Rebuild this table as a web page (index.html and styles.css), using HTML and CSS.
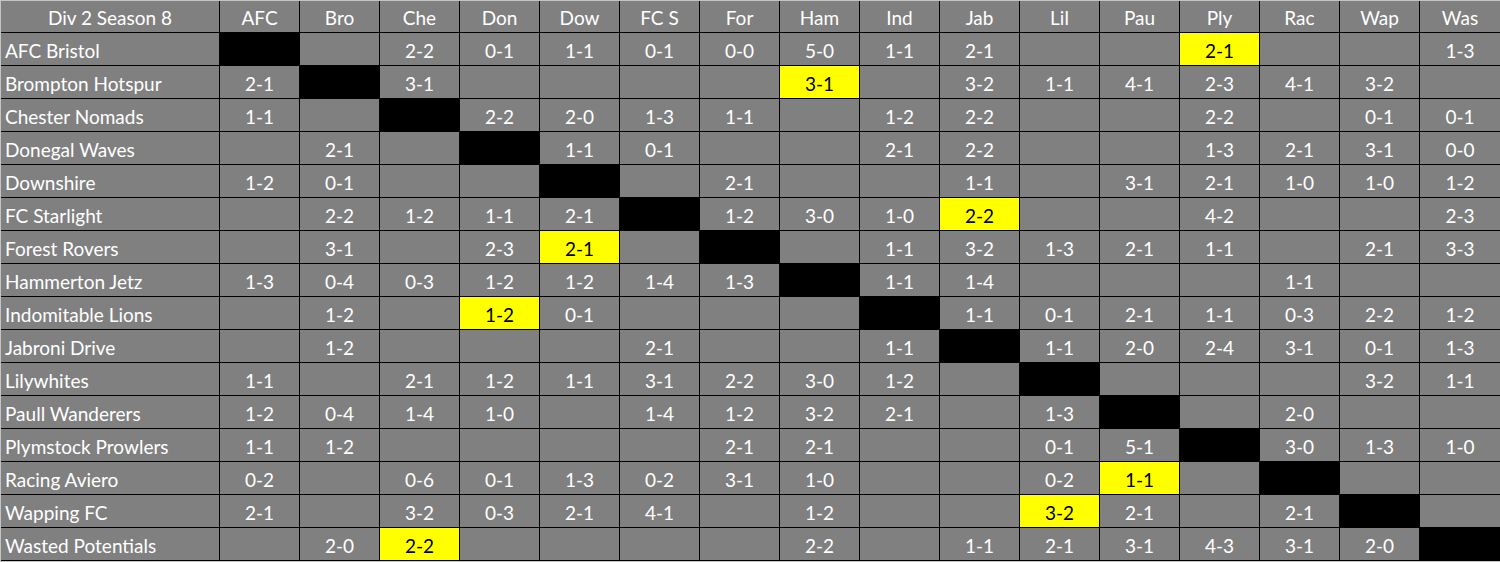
FILE: index.html
```html
<!DOCTYPE html>
<html>
<head>
<meta charset="utf-8">
<link rel="stylesheet" href="styles.css">
</head>
<body>
<div class="sheet">
  <div class="row"><div class="c name head">Div 2 Season 8</div><div class="c">AFC</div><div class="c">Bro</div><div class="c">Che</div><div class="c">Don</div><div class="c">Dow</div><div class="c">FC S</div><div class="c">For</div><div class="c">Ham</div><div class="c">Ind</div><div class="c">Jab</div><div class="c">Lil</div><div class="c">Pau</div><div class="c">Ply</div><div class="c">Rac</div><div class="c">Wap</div><div class="c">Was</div></div>
  <div class="row"><div class="c name">AFC Bristol</div><div class="c x"></div><div class="c"></div><div class="c">2-2</div><div class="c">0-1</div><div class="c">1-1</div><div class="c">0-1</div><div class="c">0-0</div><div class="c">5-0</div><div class="c">1-1</div><div class="c">2-1</div><div class="c"></div><div class="c"></div><div class="c y">2-1</div><div class="c"></div><div class="c"></div><div class="c">1-3</div></div>
  <div class="row"><div class="c name">Brompton Hotspur</div><div class="c">2-1</div><div class="c x"></div><div class="c">3-1</div><div class="c"></div><div class="c"></div><div class="c"></div><div class="c"></div><div class="c y">3-1</div><div class="c"></div><div class="c">3-2</div><div class="c">1-1</div><div class="c">4-1</div><div class="c">2-3</div><div class="c">4-1</div><div class="c">3-2</div><div class="c"></div></div>
  <div class="row"><div class="c name">Chester Nomads</div><div class="c">1-1</div><div class="c"></div><div class="c x"></div><div class="c">2-2</div><div class="c">2-0</div><div class="c">1-3</div><div class="c">1-1</div><div class="c"></div><div class="c">1-2</div><div class="c">2-2</div><div class="c"></div><div class="c"></div><div class="c">2-2</div><div class="c"></div><div class="c">0-1</div><div class="c">0-1</div></div>
  <div class="row"><div class="c name">Donegal Waves</div><div class="c"></div><div class="c">2-1</div><div class="c"></div><div class="c x"></div><div class="c">1-1</div><div class="c">0-1</div><div class="c"></div><div class="c"></div><div class="c">2-1</div><div class="c">2-2</div><div class="c"></div><div class="c"></div><div class="c">1-3</div><div class="c">2-1</div><div class="c">3-1</div><div class="c">0-0</div></div>
  <div class="row"><div class="c name">Downshire</div><div class="c">1-2</div><div class="c">0-1</div><div class="c"></div><div class="c"></div><div class="c x"></div><div class="c"></div><div class="c">2-1</div><div class="c"></div><div class="c"></div><div class="c">1-1</div><div class="c"></div><div class="c">3-1</div><div class="c">2-1</div><div class="c">1-0</div><div class="c">1-0</div><div class="c">1-2</div></div>
  <div class="row"><div class="c name">FC Starlight</div><div class="c"></div><div class="c">2-2</div><div class="c">1-2</div><div class="c">1-1</div><div class="c">2-1</div><div class="c x"></div><div class="c">1-2</div><div class="c">3-0</div><div class="c">1-0</div><div class="c y">2-2</div><div class="c"></div><div class="c"></div><div class="c">4-2</div><div class="c"></div><div class="c"></div><div class="c">2-3</div></div>
  <div class="row"><div class="c name">Forest Rovers</div><div class="c"></div><div class="c">3-1</div><div class="c"></div><div class="c">2-3</div><div class="c y">2-1</div><div class="c"></div><div class="c x"></div><div class="c"></div><div class="c">1-1</div><div class="c">3-2</div><div class="c">1-3</div><div class="c">2-1</div><div class="c">1-1</div><div class="c"></div><div class="c">2-1</div><div class="c">3-3</div></div>
  <div class="row"><div class="c name">Hammerton Jetz</div><div class="c">1-3</div><div class="c">0-4</div><div class="c">0-3</div><div class="c">1-2</div><div class="c">1-2</div><div class="c">1-4</div><div class="c">1-3</div><div class="c x"></div><div class="c">1-1</div><div class="c">1-4</div><div class="c"></div><div class="c"></div><div class="c"></div><div class="c">1-1</div><div class="c"></div><div class="c"></div></div>
  <div class="row"><div class="c name">Indomitable Lions</div><div class="c"></div><div class="c">1-2</div><div class="c"></div><div class="c y">1-2</div><div class="c">0-1</div><div class="c"></div><div class="c"></div><div class="c"></div><div class="c x"></div><div class="c">1-1</div><div class="c">0-1</div><div class="c">2-1</div><div class="c">1-1</div><div class="c">0-3</div><div class="c">2-2</div><div class="c">1-2</div></div>
  <div class="row"><div class="c name">Jabroni Drive</div><div class="c"></div><div class="c">1-2</div><div class="c"></div><div class="c"></div><div class="c"></div><div class="c">2-1</div><div class="c"></div><div class="c"></div><div class="c">1-1</div><div class="c x"></div><div class="c">1-1</div><div class="c">2-0</div><div class="c">2-4</div><div class="c">3-1</div><div class="c">0-1</div><div class="c">1-3</div></div>
  <div class="row"><div class="c name">Lilywhites</div><div class="c">1-1</div><div class="c"></div><div class="c">2-1</div><div class="c">1-2</div><div class="c">1-1</div><div class="c">3-1</div><div class="c">2-2</div><div class="c">3-0</div><div class="c">1-2</div><div class="c"></div><div class="c x"></div><div class="c"></div><div class="c"></div><div class="c"></div><div class="c">3-2</div><div class="c">1-1</div></div>
  <div class="row"><div class="c name">Paull Wanderers</div><div class="c">1-2</div><div class="c">0-4</div><div class="c">1-4</div><div class="c">1-0</div><div class="c"></div><div class="c">1-4</div><div class="c">1-2</div><div class="c">3-2</div><div class="c">2-1</div><div class="c"></div><div class="c">1-3</div><div class="c x"></div><div class="c"></div><div class="c">2-0</div><div class="c"></div><div class="c"></div></div>
  <div class="row"><div class="c name">Plymstock Prowlers</div><div class="c">1-1</div><div class="c">1-2</div><div class="c"></div><div class="c"></div><div class="c"></div><div class="c"></div><div class="c">2-1</div><div class="c">2-1</div><div class="c"></div><div class="c"></div><div class="c">0-1</div><div class="c">5-1</div><div class="c x"></div><div class="c">3-0</div><div class="c">1-3</div><div class="c">1-0</div></div>
  <div class="row"><div class="c name">Racing Aviero</div><div class="c">0-2</div><div class="c"></div><div class="c">0-6</div><div class="c">0-1</div><div class="c">1-3</div><div class="c">0-2</div><div class="c">3-1</div><div class="c">1-0</div><div class="c"></div><div class="c"></div><div class="c">0-2</div><div class="c y">1-1</div><div class="c"></div><div class="c x"></div><div class="c"></div><div class="c"></div></div>
  <div class="row"><div class="c name">Wapping FC</div><div class="c">2-1</div><div class="c"></div><div class="c">3-2</div><div class="c">0-3</div><div class="c">2-1</div><div class="c">4-1</div><div class="c"></div><div class="c">1-2</div><div class="c"></div><div class="c"></div><div class="c y">3-2</div><div class="c">2-1</div><div class="c"></div><div class="c">2-1</div><div class="c x"></div><div class="c"></div></div>
  <div class="row"><div class="c name">Wasted Potentials</div><div class="c"></div><div class="c">2-0</div><div class="c y">2-2</div><div class="c"></div><div class="c"></div><div class="c"></div><div class="c"></div><div class="c">2-2</div><div class="c"></div><div class="c">1-1</div><div class="c">2-1</div><div class="c">3-1</div><div class="c">4-3</div><div class="c">3-1</div><div class="c">2-0</div><div class="c x"></div></div>
</div>
</body>
</html>
```
FILE: styles.css
```css
html, body {
  margin: 0;
  padding: 0;
  background: #ffffff;
}
.sheet {
  display: grid;
  grid-template-columns: 218px repeat(15, 79px) 80px;
  grid-template-rows: 31px repeat(16, 32px);
  gap: 1px;
  width: 1499px;
  background: #000000;
  border-top: 1px solid #c4c4c4;
  border-left: 1px solid #c4c4c4;
  border-bottom: 1px solid #c4c4c4;
  padding-bottom: 1px;
  font-family: Lato, "Open Sans", sans-serif;
  font-size: 19px;
  color: #ffffff;
}
.row {
  display: contents;
}
.c {
  background: #808080;
  text-align: center;
  line-height: 32px;
  padding-top: 2px;
  box-sizing: border-box;
  white-space: nowrap;
  overflow: hidden;
}
.name {
  text-align: left;
  padding-left: 4px;
}
.name.head {
  text-align: center;
  padding-left: 0;
}
.row:first-child .c {
  line-height: 30px;
}
.x {
  background: #000000;
}
.y {
  background: #ffff00;
  color: #000000;
}
```
